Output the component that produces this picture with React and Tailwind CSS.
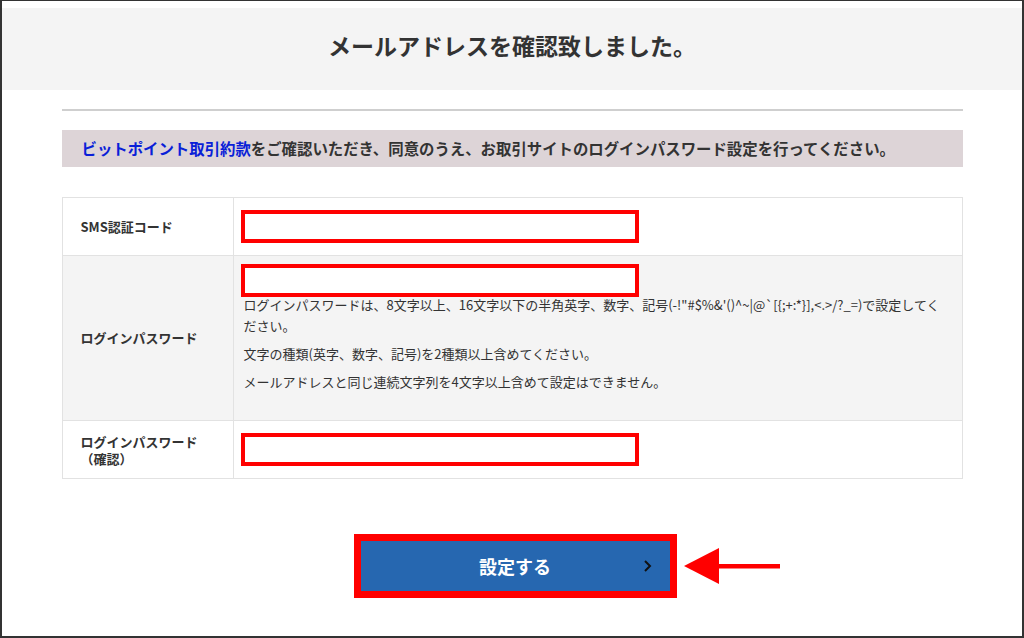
const font = { fontFamily: '"Noto Sans CJK JP", "Noto Sans", sans-serif' };

const pwRule =
  "ログインパスワードは、8文字以上、16文字以下の半角英字、数字、記号(-!\"#$%&'()^~|@`[{;+:*}],<.>/?_=)で設定してください。";

const RedInput = () => (
  <div className="w-[398px] h-[33px] border-[4px] border-[#ff0000] bg-white" />
);

const App = () => {
  return (
    <div
      className="w-[1024px] h-[638px] bg-white border-2 border-t border-[#333] flex flex-col text-[#333] overflow-hidden"
      style={font}
    >
      <div className="mt-[7px] h-[82px] bg-[#f4f4f4] flex items-center justify-center pb-[8px]">
        <h1 className="text-[23px] font-bold">メールアドレスを確認致しました。</h1>
      </div>

      <div className="w-[901px] mx-auto flex flex-col">
        <div className="mt-[19px] h-[2px] bg-[#cfcfcf]" />

        <div className="mt-[19px] h-[37px] bg-[#ddd4d7] flex items-center pl-[20px] text-[15.4px] font-bold">
          <span className="text-[#0a1fd8]">ビットポイント取引約款</span>
          <span>をご確認いただき、同意のうえ、お取引サイトのログインパスワード設定を行ってください。</span>
        </div>

        <div className="mt-[30px] border border-[#e2e2e2] flex flex-col">
          <div className="flex h-[57px]">
            <div className="w-[171px] border-r border-[#e2e2e2] flex items-center pl-[18px] text-[13px] font-bold">
              SMS認証コード
            </div>
            <div className="flex-1 flex items-center pl-[7px]">
              <RedInput />
            </div>
          </div>

          <div className="flex h-[165px] bg-[#f4f4f4] border-t border-[#e2e2e2]">
            <div className="w-[171px] border-r border-[#e2e2e2] flex items-center pl-[18px] text-[13px] font-bold">
              ログインパスワード
            </div>
            <div className="flex-1 pl-[7px] pt-[8px] pr-[14px] text-[13px] leading-[21px]">
              <RedInput />
              <p className="-mt-[3px] pl-[3px]">{pwRule}</p>
              <p className="mt-[7px] pl-[3px]">文字の種類(英字、数字、記号)を2種類以上含めてください。</p>
              <p className="mt-[7px] pl-[3px]">メールアドレスと同じ連続文字列を4文字以上含めて設定はできません。</p>
            </div>
          </div>

          <div className="flex h-[58px] border-t border-[#e2e2e2]">
            <div className="w-[171px] border-r border-[#e2e2e2] flex flex-col justify-center pl-[18px] text-[13px] font-bold leading-[17px]">
              <span>ログインパスワード</span>
              <span>（確認）</span>
            </div>
            <div className="flex-1 flex items-center pl-[7px]">
              <RedInput />
            </div>
          </div>
        </div>
      </div>

      <div className="mt-[55px] flex justify-center pl-[6px]">
        <div className="relative">
          <div className="w-[323px] h-[64px] bg-[#ff0000] p-[7px]">
            <button className="w-full h-full bg-[#2667b0] flex items-center justify-center relative text-white text-[18px] font-bold">
              設定する
              <svg
                className="absolute right-[18px] top-1/2 -translate-y-1/2"
                width="10"
                height="14"
                viewBox="0 0 10 14"
                fill="none"
                stroke="#111"
                strokeWidth="2"
              >
                <path d="M3 2l5 5-5 5" />
              </svg>
            </button>
          </div>
          <svg
            className="absolute left-[329px] top-1/2 -translate-y-1/2"
            width="98"
            height="38"
            viewBox="0 0 98 38"
          >
            <polygon points="1,19 36,1 36,37" fill="#ff0000" />
            <rect x="34" y="17" width="63" height="4.5" fill="#ff0000" />
          </svg>
        </div>
      </div>
    </div>
  );
};

export default App;
